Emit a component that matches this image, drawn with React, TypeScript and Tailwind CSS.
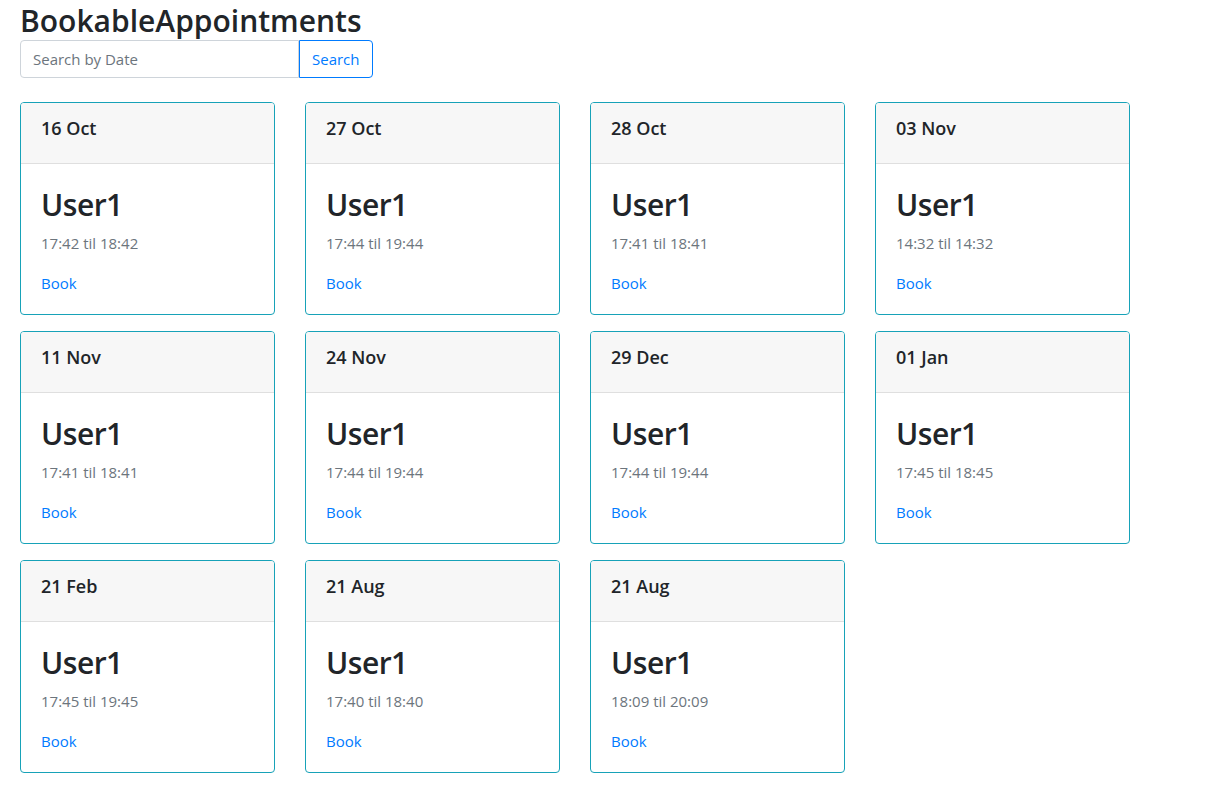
import React from 'react';

type Slot = { date: string; user: string; from: string; to: string };

const slots: Slot[] = [
  { date: '16 Oct', user: 'User1', from: '17:42', to: '18:42' },
  { date: '27 Oct', user: 'User1', from: '17:44', to: '19:44' },
  { date: '28 Oct', user: 'User1', from: '17:41', to: '18:41' },
  { date: '03 Nov', user: 'User1', from: '14:32', to: '14:32' },
  { date: '11 Nov', user: 'User1', from: '17:41', to: '18:41' },
  { date: '24 Nov', user: 'User1', from: '17:44', to: '19:44' },
  { date: '29 Dec', user: 'User1', from: '17:44', to: '19:44' },
  { date: '01 Jan', user: 'User1', from: '17:45', to: '18:45' },
  { date: '21 Feb', user: 'User1', from: '17:45', to: '19:45' },
  { date: '21 Aug', user: 'User1', from: '17:40', to: '18:40' },
  { date: '21 Aug', user: 'User1', from: '18:09', to: '20:09' },
];

const SlotCard: React.FC<{ slot: Slot }> = ({ slot }) => (
  <div className="w-[255px] h-[213px] border border-[#17a2b8] rounded-[4px] flex flex-col overflow-hidden">
    <div className="h-[61px] bg-[#f7f7f7] border-b border-[#dfdfdf] px-5 pt-[13px]">
      <h5 className="text-[18px] leading-[25px] font-semibold text-[#212529]">{slot.date}</h5>
    </div>
    <div className="px-5 pt-[22px]">
      <h2 className="text-[30px] leading-[38px] tracking-[-0.5px] font-semibold text-[#212529] mb-[7px]">
        {slot.user}
      </h2>
      <p className="text-[15px] leading-[24px] text-[#6c757d] mb-[16px]">
        {slot.from} til {slot.to}
      </p>
      <a href="#" className="text-[15px] leading-[24px] text-[#007bff]">
        Book
      </a>
    </div>
  </div>
);

export default function App() {
  return (
    <div className="min-h-screen bg-white px-5 font-['Open_Sans',sans-serif] text-[#212529]">
      <h3 className="h-[40px] text-[30px] leading-[41px] font-semibold">BookableAppointments</h3>
      <div className="flex h-[38px] mb-[24px]">
        <input
          placeholder="Search by Date"
          className="w-[279px] h-full border border-[#ced4da] rounded-l-[4px] px-3 text-[15px] text-[#495057] placeholder:text-[#6c757d] outline-none"
        />
        <button className="h-full px-3 border border-[#007bff] rounded-r-[4px] text-[15px] text-[#007bff] bg-white">
          Search
        </button>
      </div>
      <div className="grid grid-cols-[repeat(4,255px)] gap-x-[30px] gap-y-[16px]">
        {slots.map((s, i) => (
          <SlotCard key={i} slot={s} />
        ))}
      </div>
    </div>
  );
}
